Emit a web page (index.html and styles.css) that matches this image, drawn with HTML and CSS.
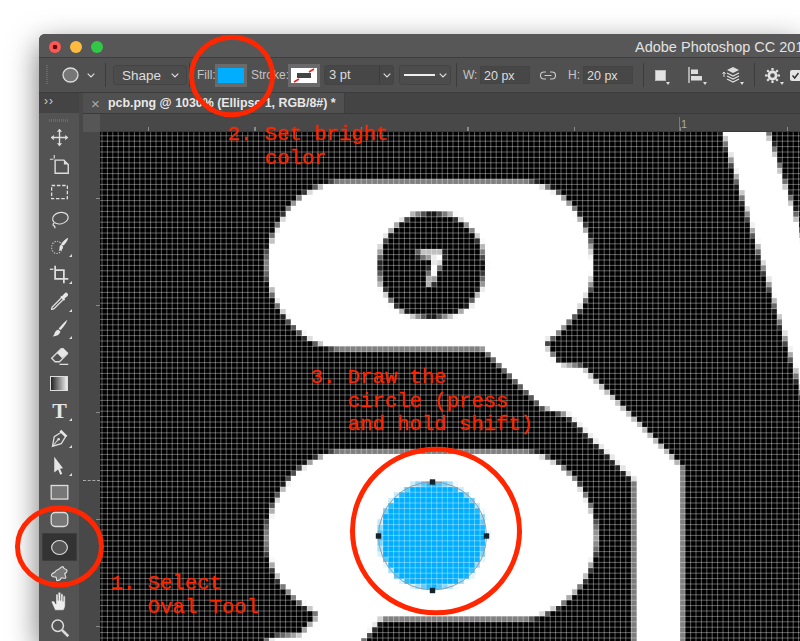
FILE: index.html
```html
<!DOCTYPE html>
<html lang="en">
<head>
<meta charset="utf-8">
<title>Photoshop oval tool</title>
<link rel="stylesheet" href="styles.css">
</head>
<body>
<div class="window">
  <header class="titlebar">
    <span class="light red"></span><span class="light yellow"></span><span class="light green"></span>
    <span class="apptitle">Adobe Photoshop CC 2018</span>
  </header>
  <div class="options">
    <span class="grip"></span>
    <svg class="opt-shape" width="17" height="16" viewBox="0 0 17 16"><ellipse cx="8.5" cy="8" rx="7.5" ry="7" fill="#777" stroke="#ddd" stroke-width="1.3"/></svg>
    <svg class="chev opt-chev" width="8" height="5" viewBox="0 0 8 5"><path d="M.7.7 4 4 7.3.7" fill="none" stroke="#ddd" stroke-width="1.2"/></svg>
    <span class="sep sep-a"></span>
    <div class="select shape-select"><span>Shape</span><svg class="chev" width="8" height="5" viewBox="0 0 8 5"><path d="M.7.7 4 4 7.3.7" fill="none" stroke="#ddd" stroke-width="1.2"/></svg></div>
    <span class="sep sep-b"></span>
    <span class="lbl fill-lbl">Fill:</span>
    <span class="swatch fill-sw"><i class="blue"></i></span>
    <span class="lbl stroke-lbl">Stroke:</span>
    <span class="swatch stroke-sw"><svg width="26" height="15" viewBox="0 0 26 15"><rect width="26" height="15" fill="#fff"/><rect x="6" y="5" width="14" height="5" fill="#444"/><path d="M18 4 23 1M3 14 8 11" stroke="#e22" stroke-width="1.6"/></svg></span>
    <div class="combo"><span class="combo-val">3 pt</span><span class="combo-btn"><svg width="8" height="5" viewBox="0 0 8 5"><path d="M.7.7 4 4 7.3.7" fill="none" stroke="#ddd" stroke-width="1.2"/></svg></span></div>
    <div class="select line-select"><i class="stroke-line"></i><svg width="8" height="5" viewBox="0 0 8 5"><path d="M.7.7 4 4 7.3.7" fill="none" stroke="#ddd" stroke-width="1.2"/></svg></div>
    <span class="sep sep-c"></span>
    <span class="lbl w-lbl">W:</span>
    <span class="field">20 px</span>
    <svg class="link" width="16" height="9" viewBox="0 0 16 9"><path d="M6 1H4a3.5 3.5 0 0 0 0 7h2M10 1h2a3.5 3.5 0 0 1 0 7h-2M4.500 4.500h7" fill="none" stroke="#ccc" stroke-width="1.100"/></svg>
    <span class="lbl h-lbl">H:</span>
    <span class="field">20 px</span>
    <span class="sep sep-d"></span>
    <span class="opt-ic ic-square"><i class="square"></i></span>
    <span class="opt-ic ic-align"><svg width="15" height="16" viewBox="0 0 15 16"><path d="M1 0v16" stroke="#ddd" stroke-width="1.300"/><rect x="3" y="2.500" width="7" height="4.500" fill="#ddd"/><rect x="3" y="9" width="11" height="4.500" fill="#ddd"/></svg></span>
    <span class="opt-ic ic-arrange"><svg width="19" height="18" viewBox="0 0 19 18"><path d="M3 6v5M1.500 8 3 6l1.500 2" fill="none" stroke="#ddd"/><path d="M12 1l6 3-6 3-6-3z" fill="#ddd"/><path d="M6 7l6 3 6-3M6 10l6 3 6-3M6 13l6 3 6-3" fill="none" stroke="#ddd" stroke-width="1.200"/></svg></span>
    <span class="sep sep-e"></span>
    <span class="opt-ic ic-gear"><svg width="15" height="15" viewBox="0 0 15 15"><circle cx="7.500" cy="7.500" r="3.600" fill="none" stroke="#e4e4e4" stroke-width="2.600"/><path d="M7.500 0v15M0 7.500h15M2.200 2.200l10.600 10.600M12.800 2.200 2.200 12.800" stroke="#e4e4e4" stroke-width="2.200" stroke-dasharray="2.600 9.800"/></svg></span>
    <span class="check"><svg width="11" height="11" viewBox="0 0 11 11"><rect width="11" height="11" rx="2" fill="#e4e4e4"/><path d="M2.500 5.500 4.700 8 8.500 3" fill="none" stroke="#333" stroke-width="1.500"/></svg></span>
  </div>
  <div class="workspace">
    <aside class="toolbar">
      <div class="collapse">››</div>
      <div class="toolgrip"></div>
      <div class="tool"><svg viewBox="0 0 24 24"><path d="M12 3v18M3 12h18" stroke="#ddd" stroke-width="1.600"/><path d="M9 5.500 12 2l3 3.500zM9 18.500 12 22l3-3.500zM5.500 9 2 12l3.500 3zM18.500 9 22 12l-3.500 3z" fill="#ddd"/></svg></div>
      <div class="tool"><svg viewBox="0 0 24 24"><path d="M7 7h10l5 5v10H7z" fill="none" stroke="#ddd" stroke-width="1.600"/><path d="M17 7v5h5" fill="#ddd"/><path d="M1 6h4M6 1v4" stroke="#ddd" stroke-width="1.300"/></svg></div>
      <div class="tool"><svg viewBox="0 0 24 24"><rect x="3" y="4" width="18" height="15" fill="none" stroke="#ddd" stroke-width="1.500" stroke-dasharray="4 2"/></svg></div>
      <div class="tool"><svg viewBox="0 0 24 24"><ellipse cx="13" cy="10.500" rx="9" ry="6.500" transform="rotate(-12 13 10.500)" fill="none" stroke="#ddd" stroke-width="1.400"/><path d="M6 16c-1.500 1-2 2.500-.5 3 1.500.5 1.500 1.500 1 3" fill="none" stroke="#ddd" stroke-width="1.400"/></svg></div>
      <div class="tool fly"><svg viewBox="0 0 24 24"><ellipse cx="9" cy="13" rx="6" ry="7" fill="none" stroke="#bbb" stroke-width="1.300" stroke-dasharray="1.600 1.400"/><path d="M22 2c-1 4-3 7-6 9l-2-2c2-3 5-6 8-7zM14 10l2 2c0 3-2 5-5 5 1-1 1-3 1-4s1-3 2-3z" fill="#e6e6e6"/></svg></div>
      <div class="tool fly"><svg viewBox="0 0 24 24"><path d="M7 2v15h15M7 7h10v15" fill="none" stroke="#ddd" stroke-width="2"/><path d="M1 6h4" stroke="#ddd" stroke-width="1.500"/></svg></div>
      <div class="tool fly"><svg viewBox="0 0 24 24"><path d="M14 8 4 18c-1 1-1 2-1 3 1 0 2 0 3-1L16 10" fill="none" stroke="#ddd" stroke-width="1.500"/><path d="M13 7l4 4 1.500-1.500-.8-.8L21 6c1-1 1-2.500 0-3.500S19 1.500 18 2.500L14.800 6l-.8-.5z" fill="#e6e6e6"/></svg></div>
      <div class="tool fly"><svg viewBox="0 0 24 24"><path d="M21 2c-1 4-5 9-8 12l-2-2c3-3 7-8 10-10z" fill="#e6e6e6"/><path d="M10.500 13 13 15.500c-.5 3-3.500 5.500-9 5.500 2-1 2-3 3-5 .7-1.500 2-2.500 3.500-3z" fill="#e6e6e6"/></svg></div>
      <div class="tool"><svg viewBox="0 0 24 24"><path d="M3 14 14 3l7 6-9 9H7z" fill="none" stroke="#ddd" stroke-width="1.500"/><path d="M9 8l7-6 6 6-7 6z" fill="#e6e6e6"/><path d="M12 21h10" stroke="#ddd" stroke-width="1.500"/></svg></div>
      <div class="tool"><i class="gradient"></i></div>
      <div class="tool fly"><svg viewBox="0 0 24 24"><text x="12" y="21" text-anchor="middle" class="t-glyph">T</text></svg></div>
      <div class="tool fly"><svg viewBox="0 0 24 24"><path d="M4 22 6 11l8-5 5 5-5 8z" fill="none" stroke="#ddd" stroke-width="1.500"/><path d="M4 22l6-7" stroke="#ddd" stroke-width="1.200"/><circle cx="11" cy="14" r="1.500" fill="#ddd"/><path d="M14 3l7 7-2 2-7-7z" fill="#e6e6e6"/></svg></div>
      <div class="tool fly"><svg viewBox="0 0 24 24"><path d="M6 2v18l5-4 5-1z" fill="#e6e6e6"/><path d="M11 15l3 7" stroke="#e6e6e6" stroke-width="2.400"/></svg></div>
      <div class="tool"><svg viewBox="0 0 24 24"><rect x="2.500" y="4" width="19" height="15.500" fill="#777" stroke="#ddd" stroke-width="1.500"/></svg></div>
      <div class="tool"><svg viewBox="0 0 24 24"><rect x="2.500" y="4" width="19" height="16" rx="4.500" fill="#777" stroke="#ddd" stroke-width="1.500"/></svg></div>
      <div class="tool active"><svg viewBox="0 0 24 24"><ellipse cx="12" cy="12" rx="9" ry="8" fill="#555" stroke="#ddd" stroke-width="1.300"/></svg></div>
      <div class="tool"><svg viewBox="0 0 24 24"><path d="M11 6c2-1 2-3 5-3 1 2 1 3 3 3 3 1 1 4-1 5 0 2 2 3 1 5-2 1-4-1-5 0-1 3-3 3-5 3-1-2 0-3-1-4-3 0-6-1-5-3 1-2 3-2 4-3 1-2 2-2 4-3z" fill="#777" stroke="#ddd" stroke-width="1.300"/></svg></div>
      <div class="tool"><svg viewBox="0 0 24 24"><path d="M7 22 3 13c0-2 2-2 3-1l2 3V5c0-2 2.500-2 2.500 0v6V3c0-2 2.800-2 2.800 0v8V4.500c0-2 2.700-2 2.700 0V12V7c0-2 2.500-2 2.500 0v9c0 3-1 4-2 6z" fill="#eee" stroke="#555" stroke-width=".5"/></svg></div>
      <div class="tool last"><svg viewBox="0 0 24 24"><circle cx="10" cy="10" r="6.500" fill="none" stroke="#ddd" stroke-width="1.800"/><path d="M15 15l7 7" stroke="#ddd" stroke-width="3"/></svg></div>
    </aside>
    <main class="docarea">
      <div class="tabbar"><div class="tab"><span class="tabx">×</span><span class="tabname">pcb.png @ 1030% (Ellipse 1, RGB/8#) *</span></div></div>
      <div class="rulerrow"><div class="corner"></div><div class="hruler"><span class="rulernum">1</span></div></div>
      <div class="canvasrow">
        <div class="vruler"><i class="guide"></i></div>
        <canvas id="doc" width="700" height="509"></canvas>
      </div>
    </main>
  </div>
</div>

<svg class="rings" width="800" height="641" viewBox="0 0 800 641">
  <ellipse cx="232" cy="76" rx="40.500" ry="38.800"/>
  <ellipse cx="59.500" cy="546.500" rx="42" ry="38.400"/>
  <ellipse cx="436" cy="531" rx="83.500" ry="81.800"/>
</svg>
<div class="note note-2">2. Set bright
   color</div>
<div class="note note-3">3. Draw the
   circle (press
   and hold shift)</div>
<div class="note note-1">1. Select
   Oval Tool</div>
<script src="script.js"></script>
</body>
</html>
```
FILE: styles.css
```css
* { box-sizing: border-box; }
html, body { margin: 0; height: 100%; }
body {
  background: #fff;
  overflow: hidden;
  font-family: "Liberation Sans", Arial, sans-serif;
  color: #ddd;
  position: relative;
}
.window {
  margin: 34px 0 0 39px;
  width: 761px;
  height: 607px;
  border-radius: 6px 0 0 0;
  background: #535353;
  box-shadow: 0 10px 30px rgba(0,0,0,.55);
  overflow: hidden;
  display: flex;
  flex-direction: column;
}
.titlebar {
  height: 24px;
  flex: none;
  display: flex;
  align-items: center;
  background: #575757;
  border-bottom: 1px solid #3e3e3e;
  padding: 2px 0 0 10px;
  gap: 9px;
}
.light { width: 12px; height: 12px; border-radius: 50%; flex: none; }
.red { background: radial-gradient(circle, #5a0b08 0 2px, #fc5753 2.600px); }
.yellow { background: #fdbc40; }
.green { background: #33c748; }
.apptitle {
  position: absolute;
  left: 635px;
  top: 38px;
  font-size: 14.500px;
  line-height: 18px;
  white-space: nowrap;
  color: #e2e2e2;
}
.options {
  height: 35px;
  flex: none;
  display: flex;
  align-items: center;
  background: #505050;
  border-bottom: 1px solid #3c3c3c;
  font-size: 13px;
}
.options > * { flex: none; }
.grip { width: 2px; height: 20px; margin-left: 7px; background: repeating-linear-gradient(#6a6a6a 0 1px, transparent 1px 2px); }
.opt-shape { margin-left: 14px; }
.opt-chev { margin-left: 8px; }
.sep { width: 1px; height: 24px; background: #3c3c3c; }
.sep-a { margin-left: 10px; }
.select {
  display: flex;
  align-items: center;
  justify-content: space-between;
  height: 20px;
  border: 1px solid #444;
  border-radius: 3px;
  background: #4c4c4c;
}
.shape-select { width: 74px; margin-left: 7px; padding: 0 7px 0 8px; font-size: 13.500px; }
.sep-b { margin-left: 2px; }
.lbl { color: #c4c4c4; font-size: 12px; }
.fill-lbl { margin-left: 7px; width: 18px; }
.swatch {
  width: 32px;
  height: 23px;
  background: #6a6a6a;
  display: flex;
  align-items: center;
  justify-content: center;
}
.fill-sw { margin-left: 0; }
.blue { display: block; width: 26px; height: 15px; background: #00aeff; }
.stroke-lbl { margin-left: 4px; width: 37px; }
.combo { display: flex; height: 20px; width: 70px; margin-left: 4px; border: 1px solid #444; border-radius: 3px; background: #474747; }
.combo-val { width: 54px; padding-left: 4px; line-height: 18px; font-size: 13px; }
.combo-btn { flex: 1; display: flex; align-items: center; justify-content: center; border-left: 1px solid #3c3c3c; }
.line-select { width: 52px; margin-left: 5px; padding: 0 3px 0 4px; }
.stroke-line { display: block; width: 31px; height: 2px; background: #eee; }
.sep-c { margin-left: 5px; }
.w-lbl { margin-left: 6px; width: 17px; }
.field {
  width: 50px;
  height: 18px;
  line-height: 18px;
  padding-left: 3px;
  background: #474747;
  border: 1px solid #444;
  font-size: 12.500px;
}
.link { margin-left: 10px; }
.h-lbl { margin-left: 12px; width: 15px; }
.sep-d { margin-left: 10px; }
.opt-ic { position: relative; display: flex; align-items: center; height: 20px; }
.opt-ic::after {
  content: "";
  position: absolute;
  right: -4px;
  bottom: 0;
  border-left: 2px solid transparent;
  border-right: 2px solid transparent;
  border-top: 3px solid #ddd;
}
.ic-square { margin-left: 11px; }
.square { display: block; width: 11px; height: 11px; background: #e2e2e2; border: 1px solid #bbb; }
.ic-align { margin-left: 22px; }
.ic-arrange { margin-left: 18px; }
.sep-e { margin-left: 14px; }
.ic-gear { margin-left: 10px; }
.check { margin-left: 10px; display: flex; }
.workspace { flex: 1; display: flex; min-height: 0; }
.toolbar {
  width: 44px;
  flex: none;
  background: #535353;
  border-right: 4px solid #484848;
  display: flex;
  flex-direction: column;
  align-items: stretch;
}
.collapse {
  height: 20px;
  background: #444;
  font-size: 12px;
  line-height: 17px;
  padding-left: 5px;
  letter-spacing: 1px;
  color: #ccc;
  flex: none;
}
.toolgrip { height: 8px; margin: 3px 10px 0; flex: none; background: repeating-linear-gradient(90deg, #6a6a6a 0 1px, transparent 1px 2px) center / 100% 3px no-repeat; }
.tool {
  height: 27.300px;
  flex: none;
  position: relative;
  display: flex;
  align-items: center;
  justify-content: center;
}
.tool.last { height: 25px; }
.tool svg { width: 21px; height: 21px; }
.tool.fly::after {
  content: "";
  position: absolute;
  left: 30px;
  top: 21px;
  border-left: 3px solid transparent;
  border-bottom: 3px solid #ddd;
}
.tool.active { background: #333; margin: 0 2px 0 3px; height: 27.300px; border-radius: 2px; box-shadow: inset 0 0 0 1px #3d3d3d; }
.gradient { display: block; width: 18px; height: 15px; background: linear-gradient(90deg, #222, #eee); border: 1px solid #ddd; }
.t-glyph { font: bold 25px "Liberation Serif", serif; fill: #e6e6e6; }
.docarea { flex: 1; min-width: 0; display: flex; flex-direction: column; }
.tabbar { height: 20px; flex: none; background: #444; }
.tab {
  width: 262px;
  height: 20px;
  background: #505050;
  display: flex;
  align-items: center;
  font-size: 12.400px;
  border-right: 1px solid #3e3e3e;
}
.tabx { width: 25px; text-align: center; color: #aaa; font-size: 15px; }
.tabname { color: #e8e8e8; font-weight: bold; white-space: nowrap; }
.rulerrow { height: 19px; flex: none; display: flex; border-top: 1px solid #3a3a3a; }
.corner { width: 17px; background: #565656; }
.hruler {
  flex: 1;
  position: relative;
  background: #484848 repeating-linear-gradient(90deg, #8a8a8a 0 1px, transparent 1px 106.500px) 48px bottom / 100% 4px no-repeat;
  border-bottom: 1px solid #3a3a3a;
}
.rulernum { position: absolute; left: 579px; top: 3px; font-size: 11px; line-height: 14px; color: #aaa; border-left: 1px solid #777; padding-left: 1px; }
.canvasrow { flex: 1; display: flex; min-height: 0; }
.vruler {
  width: 17px;
  flex: none;
  position: relative;
  background: #484848 repeating-linear-gradient(#8a8a8a 0 1px, transparent 1px 107px) right 66px / 4px 100% no-repeat;
}
.guide { position: absolute; left: 0; top: 348px; width: 17px; border-top: 1px dashed #aaa; }
#doc { display: block; flex: none; width: 700px; height: 509px; align-self: flex-start; background: #000; }
.rings { position: absolute; left: 0; top: 0; pointer-events: none; }
.rings ellipse { fill: none; stroke: #ff2600; stroke-width: 5px; }
.note {
  position: absolute;
  font-family: "Liberation Mono", "Courier New", monospace;
  font-size: 20.600px;
  line-height: 23.500px;
  color: #ff2600;
  -webkit-text-stroke: .4px #ff2600;
  white-space: pre;
}
.note-2 { left: 228px; top: 123px; }
.note-3 { left: 311px; top: 366px; }
.note-1 { left: 111px; top: 572px; }
```
FILE: script.js
```js
(function () {
  var PITCH = 5.4, X0 = 96.6, Y0 = 130.4, COLS = 131, ROWS = 95;
  var doc = document.getElementById('doc');
  var g = doc.getContext('2d');
  var low = document.createElement('canvas');
  low.width = COLS;
  low.height = ROWS;
  var o = low.getContext('2d');
  o.fillStyle = '#000';
  o.fillRect(0, 0, COLS, ROWS);
  o.scale(1 / PITCH, 1 / PITCH);
  o.translate(-X0, -Y0);

  function shape(color, draw) {
    o.fillStyle = color;
    o.beginPath();
    draw();
    o.fill();
  }
  shape('#fff', function () {
    o.moveTo(338, 181.7);
    o.lineTo(527, 181.7);
    o.bezierCurveTo(565, 184, 594, 225, 594, 265);
    o.bezierCurveTo(594, 300, 570, 325, 545, 343);
    o.lineTo(558, 363);
    o.lineTo(583, 367);
    o.lineTo(682.5, 466);
    o.lineTo(682.5, 660);
    o.lineTo(634, 660);
    o.lineTo(634, 482);
    o.lineTo(567, 415);
    o.lineTo(543, 408);
    o.lineTo(483, 349);
    o.lineTo(338, 349);
    o.bezierCurveTo(300, 346, 267, 305, 266.5, 265);
    o.bezierCurveTo(267, 225, 300, 184, 338, 181.7);
  });
  shape('#000', function () { o.arc(431.7, 266, 54, 0, Math.PI * 2); });
  shape('#fff', function () {
    o.moveTo(418, 250);
    o.lineTo(443, 250);
    o.lineTo(443, 258);
    o.lineTo(432, 285);
    o.lineTo(426, 285);
    o.lineTo(433, 259);
    o.lineTo(418, 256);
  });
  shape('#fff', function () {
    o.moveTo(338, 451.7);
    o.lineTo(527, 451.7);
    o.bezierCurveTo(565, 455, 597, 497, 597, 537);
    o.bezierCurveTo(597, 577, 565, 616, 527, 619);
    o.lineTo(382, 619);
    o.lineTo(360, 645);
    o.lineTo(260, 645);
    o.lineTo(275, 636);
    o.lineTo(300, 634);
    o.lineTo(318, 615);
    o.bezierCurveTo(290, 600, 266, 575, 266.5, 537);
    o.bezierCurveTo(267, 497, 300, 455, 338, 451.7);
  });
  shape('#fff', function () {
    o.moveTo(720, 125);
    o.lineTo(766, 125);
    o.lineTo(810, 258);
    o.lineTo(810, 422);
  });
  shape('#00aeff', function () { o.arc(432.5, 536, 54, 0, Math.PI * 2); });

  g.translate(-100, -132);
  g.imageSmoothingEnabled = false;
  g.drawImage(low, X0, Y0, COLS * PITCH, ROWS * PITCH);

  g.fillStyle = 'rgba(255,255,255,.36)';
  for (var c = 0; c <= COLS; c++) g.fillRect(X0 + c * PITCH - 0.5, 132, 1, 509);
  for (var r = 0; r <= ROWS; r++) g.fillRect(100, Y0 + r * PITCH - 0.5, 700, 1);

  g.strokeStyle = '#9a9a9a';
  g.lineWidth = 1;
  g.beginPath();
  g.arc(432.5, 536, 54, 0, Math.PI * 2);
  g.stroke();
  g.fillStyle = '#14232c';
  [[432.5, 482], [432.5, 590.5], [378.5, 536], [486.5, 536]].forEach(function (p) {
    g.fillRect(p[0] - 2.7, p[1] - 2.7, 5.4, 5.4);
  });
})();
```
